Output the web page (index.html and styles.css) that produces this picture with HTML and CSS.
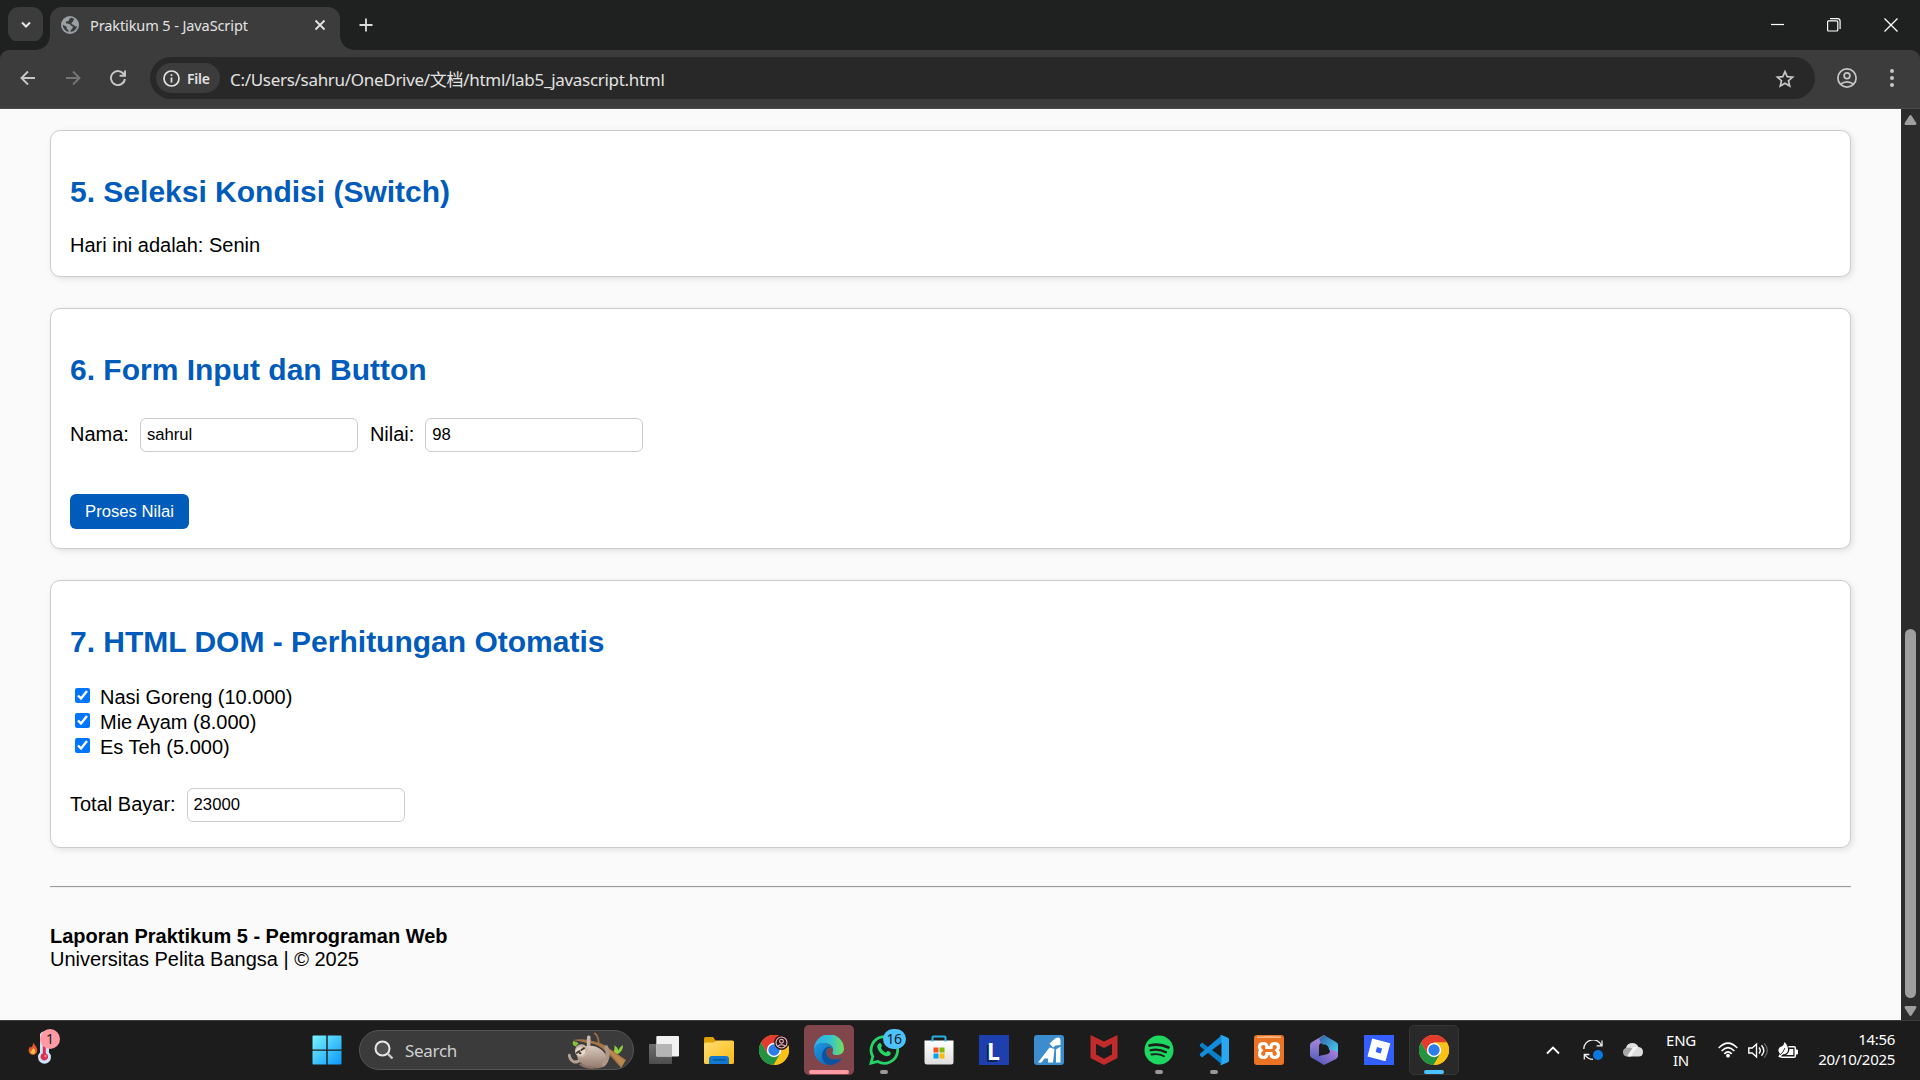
FILE: index.html
```html
<!DOCTYPE html>
<html lang="id">
<head>
<meta charset="utf-8">
<title>Praktikum 5 - JavaScript</title>
<link rel="stylesheet" href="styles.css">
</head>
<body>
<div class="screen">
  <header class="tabstrip">
    <div class="tab-search"><svg width="12" height="8" viewBox="0 0 12 8"><path d="M2 1.5l4 4 4-4" fill="none" stroke="#e6e6e6" stroke-width="2"/></svg></div>
    <div class="tab">
      <svg class="favicon" width="18" height="18" viewBox="0 0 18 18"><circle cx="9" cy="9" r="9" fill="#9aa0a6"/><path d="M10 1.8c-1 .8-2 .9-2 2.200 0 1-.8 1.200-1.800 1.200-1.200 0-1.700.8-1.200 1.900.4 1 2 .7 3.200.9 1.700.3 1.100 1.800 2.600 2 1.300.2 1.200 1.200.8 2.100-.5 1.200-1.600 1.300-1.900 2.500l-.2 1.500c3-.1 6.100-2.400 6.500-6-1.500.8-2.200.2-3-.8-.7-.9-2.300-.5-2.500-1.800-.2-1.200 1.500-1.300 1.700-2.400.1-1 .9-1.300 1.100-2.100C12.300 2.400 11.200 1.900 10 1.800zM1.800 8.500c0 3.800 2.400 6.700 5.700 7.500 0-1.200.2-1.900-.8-2.500-1-.5-1.200-1.500-1-2.500C4.700 9.700 3 9.500 1.800 8.500z" fill="#3c3c3c"/></svg>
      <span class="tab-title">Praktikum 5 - JavaScript</span>
      <svg class="tab-close" width="12" height="12" viewBox="0 0 12 12"><path d="M1.500 1.500l9 9m0-9l-9 9" stroke="#e3e3e3" stroke-width="1.800"/></svg>
    </div>
    <svg class="new-tab" width="14" height="14" viewBox="0 0 14 14"><path d="M7 .5v13M.5 7h13" stroke="#dcdcdc" stroke-width="1.800"/></svg>
    <div class="window-buttons">
      <svg width="14" height="14" viewBox="0 0 14 14"><path d="M1 6.500h13" stroke="#fff" stroke-width="1.200"/></svg>
      <svg width="14" height="14" viewBox="0 0 14 14"><rect x=".6" y="2.800" width="10.200" height="10.200" rx="1" fill="none" stroke="#fff" stroke-width="1.200"/><path d="M3 .7h7.500a2.600 2.600 0 0 1 2.600 2.600V11" fill="none" stroke="#fff" stroke-width="1.200"/></svg>
      <svg width="14" height="14" viewBox="0 0 14 14"><path d="M.5.5l13 13m0-13l-13 13" stroke="#fff" stroke-width="1.300"/></svg>
    </div>
  </header>

  <nav class="toolbar">
    <div class="nav-buttons">
      <svg width="16" height="16" viewBox="0 0 16 16"><path d="M15 8H2M8 1.500L1.500 8 8 14.500" fill="none" stroke="#c7c7c7" stroke-width="1.900"/></svg>
      <svg width="16" height="16" viewBox="0 0 16 16"><path d="M1 8h13M8 1.500L14.500 8 8 14.500" fill="none" stroke="#757575" stroke-width="1.900"/></svg>
      <svg width="16" height="16" viewBox="0 0 16 16"><path d="M14 4.500A7 7 0 1 0 14.900 9M15 .5v5.300H9.600" fill="none" stroke="#c7c7c7" stroke-width="1.900"/></svg>
    </div>
    <div class="omnibox">
      <div class="file-chip">
        <svg width="17" height="17" viewBox="0 0 17 17"><circle cx="8.500" cy="8.500" r="7.500" fill="none" stroke="#e3e3e3" stroke-width="1.700"/><path d="M8.500 7.500v5M8.500 4.300v1.700" stroke="#e3e3e3" stroke-width="1.700"/></svg>
        <span>File</span>
      </div>
      <span class="url">C:/Users/sahru/OneDrive/文档/html/lab5_javascript.html</span>
      <svg class="star" width="20" height="20" viewBox="0 0 20 20"><path d="M10 2.600l2.200 5 5.400.5-4.100 3.600 1.200 5.300L10 14.200 5.300 17l1.200-5.300-4.100-3.600 5.400-.5z" fill="none" stroke="#c7c7c7" stroke-width="1.700"/></svg>
    </div>
    <svg class="profile" width="20" height="20" viewBox="0 0 20 20"><g fill="none" stroke="#c7c7c7" stroke-width="1.700"><circle cx="10" cy="10" r="9.100"/><circle cx="10" cy="7.800" r="2.900"/><path d="M3.700 16.200c3.500-3.200 9.100-3.200 12.600 0"/></g></svg>
    <svg class="menu" width="6" height="20" viewBox="0 0 6 20"><g fill="#c7c7c7"><circle cx="3" cy="3" r="2"/><circle cx="3" cy="10" r="2"/><circle cx="3" cy="17" r="2"/></g></svg>
  </nav>

  <div class="viewport">
    <main class="page">
      <section class="card card-switch">
        <h2>5. Seleksi Kondisi (Switch)</h2>
        <p>Hari ini adalah: Senin</p>
      </section>
      <section class="card card-form">
        <h2>6. Form Input dan Button</h2>
        <div class="form-row">
          <label for="nama">Nama:</label><input id="nama" type="text" value="sahrul">
          <label for="nilai">Nilai:</label><input id="nilai" type="text" value="98">
        </div>
        <button type="button">Proses Nilai</button>
      </section>
      <section class="card card-dom">
        <h2>7. HTML DOM - Perhitungan Otomatis</h2>
        <label class="check"><input type="checkbox" checked><span>Nasi Goreng (10.000)</span></label>
        <label class="check"><input type="checkbox" checked><span>Mie Ayam (8.000)</span></label>
        <label class="check"><input type="checkbox" checked><span>Es Teh (5.000)</span></label>
        <div class="form-row total">
          <label for="total">Total Bayar:</label><input id="total" type="text" value="23000">
        </div>
      </section>
      <hr>
      <footer><b>Laporan Praktikum 5 - Pemrograman Web</b><br>Universitas Pelita Bangsa | © 2025</footer>
    </main>
    <div class="scrollbar">
      <svg width="13" height="10" viewBox="0 0 13 10"><path d="M5.200 1Q6.500-.8 7.800 1L12.300 8Q12.800 10 11 10H2Q.2 10 .7 8z" fill="#9f9f9f"/></svg>
      <div class="thumb"></div>
      <svg width="13" height="10" viewBox="0 0 13 10"><path d="M5.200 9Q6.500 10.800 7.800 9L12.300 2Q12.800 0 11 0H2Q.2 0 .7 2z" fill="#9f9f9f"/></svg>
    </div>
  </div>

  <footer class="taskbar">
    <div class="weather">
      <svg width="34" height="38" viewBox="0 0 34 38"><path d="M5.500 12.500c1 3 4 4.500 3.700 8a4.300 4.300 0 0 1-8.600.3c-.2-2 .8-3 1.400-4.300l1 1.300c1-1.500 2.300-3 2.500-5.300z" fill="#e8572a"/><path d="M5.500 18c1.500 1.800 2 3 1.600 4.500a2.400 2.400 0 0 1-4.600-.2c0-1.300 2-2.300 3-4.300z" fill="#fdc349"/><path d="M12 4a5 5 0 0 1 9 0v18.500a6.500 6.500 0 1 1-9 0z" fill="#cfe4fa"/><path d="M14.800 9h3v14.300a3.800 3.800 0 1 1-3 0z" fill="#d8304f"/><circle cx="17.500" cy="26" r="1.200" fill="#f88"/></svg>
      <span class="badge badge-pink">1</span>
    </div>
    <div class="app start"><svg width="30" height="30" viewBox="0 0 30 30"><defs><linearGradient id="win" x1="0" y1="0" x2="1" y2="1"><stop offset="0" stop-color="#7af3ff"/><stop offset="1" stop-color="#0a98fa"/></linearGradient></defs><path d="M1.500.5H14.300v14H.5V1.500q0-1 1-1zM15.700.5H28.500q1 0 1 1v13H15.700zM.5 15.800H14.300v13.700H1.500q-1 0-1-1zM15.700 15.800H29.500v12.700q0 1-1 1H15.700z" fill="url(#win)"/></svg></div>
    <div class="search">
      <svg width="20" height="20" viewBox="0 0 20 20"><circle cx="8.500" cy="8.500" r="7" fill="#505050" stroke="#e8e8e8" stroke-width="2"/><path d="M13.500 13.500l5 5" stroke="#ccc" stroke-width="2.400"/></svg>
      <span>Search</span>
      <svg class="sloth" width="60" height="37" viewBox="15 0 180 112"><defs><linearGradient id="fur" x1="0" y1="0" x2="0" y2="1"><stop offset="0" stop-color="#d9cabf"/><stop offset="1" stop-color="#94796b"/></linearGradient></defs>
        <path d="M38 44Q24 40 30 27q14 2 16 8z" fill="#86bf3c"/><path d="M152 62q4-10 3-22 10 6 11 16 4-12 15-17 0 20-20 30z" fill="#8fd03f"/>
        <path d="M94 3q14 12 13 32" fill="none" stroke="#a8743f" stroke-width="5"/>
        <path d="M28 24Q62 18 88 27q32 6 50 22l52 36-15 24Q150 78 118 50 98 34 74 34 50 26 28 24z" fill="#a67545"/><path d="M140 54l46 34-10 16Q158 78 136 60z" fill="#bd8751"/>
        <path d="M18 70q2 16 16 21 12 0 20-8" fill="none" stroke="#b5a092" stroke-width="9" stroke-linecap="round"/>
        <path d="M76 58L77 16" fill="none" stroke="#c9b8aa" stroke-width="11" stroke-linecap="round"/>
        <path d="M62 46Q92 34 118 56q22 20 12 42-12 14-36 11-34-2-50-26-8-22 18-37z" fill="url(#fur)"/>
        <path d="M122 98Q142 78 130 46" fill="none" stroke="#ad9788" stroke-width="12" stroke-linecap="round"/>
        <path d="M52 98q18 12 42 9" fill="none" stroke="#8d7466" stroke-width="7" stroke-linecap="round"/>
        <circle cx="55" cy="57" r="20" fill="#c7b4a5"/><ellipse cx="52" cy="59" rx="15" ry="13" fill="#e4d8cc"/><path d="M41 63l8-5M55 54l8-5" stroke="#4a3d38" stroke-width="6" stroke-linecap="round"/><ellipse cx="51" cy="64" rx="4" ry="3" fill="#332825"/></svg>
    </div>
    <div class="app"><svg width="30" height="28" viewBox="0 0 30 28"><defs><linearGradient id="tv" x1="0" y1="0" x2="0" y2="1"><stop offset="0" stop-color="#6f6f6f"/><stop offset="1" stop-color="#4d4d4d"/></linearGradient></defs><rect y="8" width="23" height="20" rx="1" fill="url(#tv)"/><rect x="7.300" width="22.700" height="20.500" rx="1" fill="#f1f1f1"/><path d="M7.300 8H23v12.500H7.300z" fill="#b5b5b5"/></svg></div>
    <div class="app"><svg width="30" height="27" viewBox="0 0 30 27"><defs><linearGradient id="fold" x1="0" y1="0" x2="1" y2="1"><stop offset="0" stop-color="#ffdf72"/><stop offset="1" stop-color="#fdb913"/></linearGradient></defs><path d="M0 1.500Q0 0 1.500 0H9l3 4H28q2 0 2 2v3H0z" fill="#dfa000"/><path d="M0 7q0-1.500 1.500-1.500H9.500L12.500 3.500H28.500Q30 3.500 30 5V25.500Q30 27 28.500 27H1.500Q0 27 0 25.500z" fill="url(#fold)"/><path d="M5 27V22q0-3 3-3H22q3 0 3 3v5z" fill="#1278d0"/><path d="M9 22.800H21.500" stroke="#07508f" stroke-width="1.200"/></svg></div>
    <div class="app"><svg width="30" height="30" viewBox="0 0 30 30"><g id="chrome"><circle cx="15" cy="15" r="15" fill="#fbc116"/><path d="M2 7.500A15 15 0 0 1 28 7.500H15L8.500 18.800z" fill="#e33b2e"/><path d="M2 7.500A15 15 0 0 0 15 30L21.500 18.800H8.500z" fill="#229342"/><path d="M15 15H22l-1 4-6.500 11A15 15 0 0 0 28 7.500H15z" fill="#fbc116"/><circle cx="15" cy="15" r="7.200" fill="#fff"/><circle cx="15" cy="15" r="5.700" fill="#2b7de9"/></g><circle cx="22.500" cy="7.500" r="7.400" fill="#2b171b"/><g fill="none" stroke="#eebfc5" stroke-width="1.100"><circle cx="22.500" cy="7.500" r="5.500"/><circle cx="22.500" cy="6.200" r="1.900"/><path d="M19 11q3.500-2.600 7 0"/></g></svg></div>
    <div class="app app-alert"><svg width="30" height="30" viewBox="0 0 30 30"><defs><linearGradient id="e1" x1="0" y1="0" x2="1" y2="0"><stop offset="0" stop-color="#2cadea"/><stop offset=".55" stop-color="#33c4cf"/><stop offset="1" stop-color="#76e055"/></linearGradient><linearGradient id="e2" x1="0" y1="0" x2="1" y2="1"><stop offset="0" stop-color="#1b9be4"/><stop offset="1" stop-color="#1057ab"/></linearGradient></defs><path d="M0 15A15 15 0 0 1 30 13.500C30 18 26.500 20 23 20c-4 0-5-1.500-4.200-3C20.500 11 15 8 10 8 5 8 1 11 0 15z" fill="url(#e1)"/><path d="M0 15C1 9 6 7.500 10 8c5 .6 8.500 3.500 8.800 6C16 11 12 14 12 18c0 5 6 9 15.500 5.300C24 28 20 30 15 30A15 15 0 0 1 0 15z" fill="url(#e2)"/><path d="M12 17c0 6 7 9.500 15.500 6.300C25 28 20 30.300 14.500 30 7 27 6 17 12 12.500 13.500 11.500 16 11.500 18 13c-3-1-6 1-6 4z" fill="#0d529d"/></svg><i class="bar bar-pink"></i></div>
    <div class="app"><svg width="30" height="30" viewBox="0 0 30 30"><path d="M2 28.200L3.800 21.500A13.300 13.300 0 1 1 8.800 26.500z" fill="none" stroke="#25d366" stroke-width="2.800"/><path d="M10 8.500c1.500-1 2 0 2.500 1.200.7 1.400.5 1.800-.6 3 .9 2.200 2.600 3.800 5 4.800 1.200-1.300 1.600-1.900 2.700-1.300 2 .9 2.600 1.400 2 2.800-1 2.400-4 2.600-6.500 1.500C11.500 18.800 9 15.500 8.300 12.500c-.3-1.600.2-3.200 1.700-4z" fill="#25d366"/></svg><span class="badge badge-blue">16</span><i class="bar bar-idle"></i></div>
    <div class="app"><svg width="30" height="30" viewBox="0 0 30 30"><defs><linearGradient id="st" x1="0" y1="0" x2="0" y2="1"><stop offset="0" stop-color="#fff"/><stop offset="1" stop-color="#dedede"/></linearGradient></defs><path d="M.5 5.500h29V27q0 2.500-2.500 2.500H3Q.5 29.500.5 27z" fill="url(#st)"/><path d="M8.500 6.500V2.500q0-1 1-1h11q1 0 1 1v4" fill="none" stroke="#28afe9" stroke-width="2"/><path d="M9.500 12.500h5v5h-5z" fill="#f25022"/><path d="M15.500 12.500h5v5h-5z" fill="#7fba00"/><path d="M9.500 18.500h5v5h-5z" fill="#00a4ef"/><path d="M15.500 18.500h5v5h-5z" fill="#ffb900"/></svg></div>
    <div class="app"><div class="tile-l"><span>L</span></div></div>
    <div class="app"><svg width="30" height="30" viewBox="0 0 30 30"><rect width="30" height="30" rx="3" fill="#3c8dce"/><path d="M4 27.500L15.500 12.500l5 1.500-1.500 13.500h-5V23.500h-3.500L7.500 27.500zM15.500 8.500L21 3.500q5-2.500 5.500 1.500v5l-5 .5-2.500 2zM22 14.500l4.500-3v16H22z" fill="#fff"/></svg></div>
    <div class="app"><svg width="28" height="30" viewBox="0 0 28 30"><path d="M.5 0L14 6.500 27.500 0V23L14 30 .5 23zM6 8.800V19.500l8 4.300 8-4.300V8.800L14 13z" fill="#c12b2b" fill-rule="evenodd"/></svg></div>
    <div class="app"><svg width="30" height="30" viewBox="0 0 30 30"><circle cx="15" cy="15" r="14.500" fill="#1ed760"/><g fill="none" stroke="#1c1c1c" stroke-linecap="round"><path d="M5.500 10.500q10-2.500 19 2" stroke-width="2.700"/><path d="M6.500 15.200q8-2 15.500 2" stroke-width="2.200"/><path d="M7.500 19.500q7-1.500 12.500 1.800" stroke-width="1.800"/></g></svg><i class="bar bar-idle"></i></div>
    <div class="app"><svg width="30" height="30" viewBox="0 0 30 30"><path d="M1 9.500l2-2 20 15v7L1.200 11.500q-1-1 0-2z" fill="#0a7fc9"/><path d="M1 20.500l2 2 20-15V0L1.200 18.500q-1 1 0 2z" fill="#128cdb"/><path d="M22.500 0L29 2.800q1 .5 1 1.700v21q0 1.200-1 1.700L22.500 30q-1 0-1.500-1 1.500 0 1.500-2V3q0-2-1.500-2 .5-1 1.500-1z" fill="#2aa8f2"/></svg><i class="bar bar-idle"></i></div>
    <div class="app"><svg width="30" height="30" viewBox="0 0 30 30"><rect width="30" height="30" rx="3" fill="#ea7424"/><path d="M3 1.500Q15 .5 27 1.500V3H3z" fill="#f6b587"/><path d="M9.500 8.500q3.500 0 3.500 4h4q0-4 3.500-4 4 0 4 3.500 0 2-1.500 3.200 1.500 1.300 1.500 3.600 0 3.700-4 3.700-3.500 0-3.500-4h-4q0 4-3.500 4-4 0-4-3.700 0-2.300 1.500-3.600-1.500-1.200-1.500-3.200 0-3.500 4-3.500z" fill="none" stroke="#fff" stroke-width="3.200"/></svg></div>
    <div class="app"><svg width="28" height="30" viewBox="0 0 28 30"><defs><linearGradient id="m1" x1="0" y1="0" x2="0" y2="1"><stop offset="0" stop-color="#b88cdf"/><stop offset="1" stop-color="#5763bd"/></linearGradient><linearGradient id="m2" x1="0" y1="0" x2="1" y2="1"><stop offset="0" stop-color="#315fa5"/><stop offset="1" stop-color="#49d3f4"/></linearGradient><linearGradient id="m3" x1="0" y1="1" x2="1" y2="0"><stop offset="0" stop-color="#4a55b5"/><stop offset="1" stop-color="#b184e0"/></linearGradient></defs><path d="M14 0L2 7Q0 8 0 10v10q0 2 2 3l4 2 3-5V11q0-2 2-3l6-4z" fill="url(#m1)"/><path d="M14 0l12 7q2 1 2 3v9l-9-4L11 8 9 4z" fill="url(#m2)"/><path d="M28 17v4q0 1.500-2 3L14 30 4 24l5-3 9-2q2-1 2-3v-2z" fill="url(#m3)"/><circle cx="14" cy="14.500" r="5" fill="#1c1c1c"/></svg></div>
    <div class="app"><svg width="30" height="30" viewBox="0 0 30 30"><path d="M0 0h30v30H0z" fill="#335fff"/><path d="M8.200 3.500L26.300 8.200 21.500 26.300 3.500 21.500zM13 12l-1.300 5 5 1.400 1.400-5z" fill="#fff" fill-rule="evenodd"/></svg></div>
    <div class="app app-active"><svg width="30" height="30" viewBox="0 0 30 30"><use href="#chrome"/></svg><i class="bar bar-active"></i></div>

    <div class="tray">
      <div class="tray-cell cell-30"><svg width="14" height="9" viewBox="0 0 14 9"><path d="M1 7.500L7 1.500l6 6" fill="none" stroke="#fff" stroke-width="1.800"/></svg></div>
      <div class="tray-cell cell-50"><svg width="20" height="20" viewBox="0 0 20 20"><path d="M.8 9A9.200 9.200 0 0 1 18.500 5.500M19 .5v5.300h-5.400M1.300 19.500v-5h5M1.800 14.800Q5 19.300 10 19.300" fill="none" stroke="#eee" stroke-width="1.300"/><circle cx="15" cy="15" r="5" fill="#0a78dc"/></svg></div>
      <div class="tray-cell cell-30"><svg width="20" height="14" viewBox="0 0 20 14"><path d="M4.500 13.500A4.500 4.500 0 0 1 3 5Q4 0 9.500 0q4 0 6 4 4.500.5 4.500 5 0 4.500-4.500 4.500z" fill="#dedede"/><path d="M3 5q5-1 8 1-5 2-7 7.500Q0 13 0 9q0-3 3-4z" fill="#a6a6a6"/><path d="M15.500 4Q12 6 8 13.500H5Q8 6 11 4z" fill="#f4f4f4"/></svg></div>
      <div class="tray-cell lang"><span>ENG</span><span>IN</span></div>
      <div class="tray-cell cell-30"><svg width="20" height="16" viewBox="0 0 20 16"><g fill="none" stroke="#fff" stroke-width="1.600"><path d="M.7 6Q10-3.800 19.300 6"/><path d="M3.600 9q6.400-6.800 12.800 0"/><path d="M6.300 11.900q3.700-4 7.400 0"/></g><circle cx="10" cy="13.700" r="1.900" fill="#fff"/></svg></div>
      <div class="tray-cell cell-30"><svg width="20" height="17" viewBox="0 0 20 17"><path d="M.8 6h3.400L8.500 2v13L4.200 11H.8z" fill="none" stroke="#fff" stroke-width="1.400"/><path d="M11 5.500q2.500 3 0 6M13.500 3.200q4.500 5.300 0 10.600" fill="none" stroke="#fff" stroke-width="1.400"/><path d="M16.300 1.300q6 7.200 0 14.400" fill="none" stroke="#666" stroke-width="1.300"/></svg></div>
      <div class="tray-cell cell-30"><svg width="20" height="17" viewBox="0 0 20 17"><path d="M10.500 4.800h5.500q1.300 0 1.300 1.300v7.800q0 1.300-1.300 1.300H4q-1.500 0-2-1.200" fill="none" stroke="#fff" stroke-width="1.500"/><path d="M17.500 7.500h1.500q1 0 1 1v3q0 1-1 1h-1.500zM11.500 7h3.800v6H8q3-1.500 3.500-6z" fill="#fff"/><path d="M6.500 0q3.500 3.500 3.500 7.500Q9.800 12 5 12.300L1.500 15.500.3 14.500 2 11.800Q-1 8.500 1.500 5.500 3 4.500 4 4.300 6 3 6.500 0z" fill="#fff"/><path d="M2 13Q5.500 10 7 6" stroke="#1c1c1c" fill="none" stroke-width=".9"/></svg></div>
      <div class="clock"><span>14:56</span><span>20/10/2025</span></div>
    </div>
  </footer>
</div>
</body>
</html>
```
FILE: styles.css
```css
* { box-sizing: border-box; }
body { margin: 0; background: #1c1c1c; }
svg { display: block; flex: none; }

.screen {
  display: flex;
  flex-direction: column;
  width: 1920px;
  height: 1080px;
  overflow: hidden;
  font-family: "Noto Sans", "Noto Sans CJK SC", sans-serif;
}

/* Tab strip */
.tabstrip {
  display: flex;
  height: 50px;
  padding: 7px 0 0 8px;
  background: #1f2120;
}
.tab-search {
  display: grid;
  place-items: center;
  width: 35px;
  height: 35px;
  border-radius: 11px;
  background: #3c3c3c;
}
.tab {
  position: relative;
  display: flex;
  align-items: center;
  width: 290px;
  height: 43px;
  margin-left: 7px;
  padding: 0 14px 7px 11px;
  border-radius: 12px 12px 0 0;
  background: #3c3c3c;
}
.tab::before, .tab::after {
  content: "";
  position: absolute;
  bottom: 0;
  width: 14px;
  height: 14px;
}
.tab::before { left: -14px; background: radial-gradient(circle at 0 0, transparent 13.5px, #3c3c3c 14px); }
.tab::after { right: -14px; background: radial-gradient(circle at 100% 0, transparent 13.5px, #3c3c3c 14px); }
.tab-title {
  flex: 1;
  margin-left: 11px;
  color: #e3e3e3;
  font-size: 14.5px;
  letter-spacing: -0.1px;
  white-space: nowrap;
}
.new-tab { margin: 11px 0 0 19px; }
.window-buttons {
  display: flex;
  gap: 43px;
  margin: 11px 22px 0 auto;
}

/* Toolbar */
.toolbar {
  display: flex;
  align-items: center;
  height: 59px;
  padding: 0 25px 2px 20px;
  border-bottom: 1px solid #4a4a4a;
  border-radius: 9px 9px 0 0;
  background: #3c3c3c;
  box-shadow: 0 -9px 0 0 #1f2120;
}
.nav-buttons { display: flex; gap: 29px; }
.omnibox {
  display: flex;
  align-items: center;
  width: 1665px;
  height: 42px;
  margin-left: 24px;
  padding: 0 20px 0 6px;
  border-radius: 21px;
  background: #282828;
}
.file-chip {
  display: flex;
  align-items: center;
  gap: 7px;
  width: 64px;
  height: 30px;
  padding-left: 7px;
  border-radius: 15px;
  background: #3c3c3c;
  color: #e3e3e3;
  font-size: 14px;
  font-weight: 600;
  letter-spacing: -0.2px;
}
.url {
  flex: 1;
  margin-left: 10px;
  color: #e3e3e3;
  font-size: 17px;
  letter-spacing: -0.3px;
  white-space: nowrap;
}
.star { margin-top: 2px; }
.profile { margin-left: 22px; }
.menu { margin-left: auto; }

/* Page */
.viewport { display: flex; height: 911px; }
.page {
  width: 1901px;
  padding: 21px 50px 0;
  background: #fafafa;
  color: #000;
  font-family: "Liberation Sans", Arial, sans-serif;
  font-size: 20px;
  line-height: 23px;
}
.card {
  margin-bottom: 31px;
  padding: 19px;
  border: 1px solid #ccc;
  border-radius: 10px;
  background: #fff;
  box-shadow: 2px 2px 6px rgba(0, 0, 0, 0.1);
}
.card-switch { height: 147px; }
.card-form { height: 241px; }
.card-dom { height: 268px; }
.card h2 {
  margin: 25px 0;
  color: #005bbb;
  font-size: 30px;
  line-height: 34px;
}
.card p { margin: 0; }
.form-row {
  display: flex;
  align-items: center;
  height: 34px;
  margin-top: 31px;
}
.form-row label { padding-bottom: 2px; }
.form-row input {
  width: 218px;
  height: 34px;
  margin: 0 12px 0 11px;
  padding: 0 6px;
  border: 1px solid #ccc;
  border-radius: 6px;
  background: #fff;
  color: #000;
  font: 16.67px "Liberation Sans", Arial, sans-serif;
}
.card button {
  display: block;
  width: 119px;
  height: 35px;
  margin-top: 42px;
  padding: 0;
  border: 0;
  border-radius: 6px;
  background: #005bbb;
  color: #fff;
  font: 16.67px "Liberation Sans", Arial, sans-serif;
}
.check {
  display: flex;
  height: 25px;
}
.check input {
  width: 15px;
  height: 15px;
  margin: 4px 10px 0 5px;
}
.check span { line-height: 26px; }
.form-row.total { margin-top: 29px; }
hr {
  height: 2px;
  margin: 38px 0 37px;
  border: 0;
  border-top: 1px solid #9a9a9a;
  border-bottom: 1px solid #eee;
}

/* Scrollbar */
.scrollbar {
  display: flex;
  flex-direction: column;
  align-items: center;
  width: 19px;
  padding: 6px 0 4px;
  background: #2c2c2c;
}
.thumb {
  width: 11px;
  height: 369px;
  margin: auto 0 8px;
  border-radius: 6px;
  background: #9f9f9f;
}

/* Taskbar */
.taskbar {
  display: flex;
  align-items: center;
  height: 60px;
  padding-bottom: 1px;
  border-top: 1px solid #3c3f3f;
  background: #1c1c1c;
  color: #fff;
}
.weather {
  position: relative;
  width: 299px;
  padding: 0 0 2px 28px;
}
.app {
  position: relative;
  display: grid;
  flex: none;
  place-items: center;
  width: 50px;
  height: 50px;
  margin: 0 2.5px;
  border-radius: 5px;
}
.start { margin: 0 7px 0 3px; }
.search {
  display: flex;
  align-items: center;
  width: 275px;
  height: 40px;
  margin-right: 2px;
  padding: 0 5px 0 14px;
  border: 1px solid #555;
  border-radius: 20px;
  background: #3b3b3b;
  color: #d0d0d0;
  font-size: 17px;
}
.search span { flex: 1; margin-left: 11px; letter-spacing: -0.3px; }
.app-alert { background: #81464c; }
.app-active { border: 1px solid #363636; background: #292929; }
.bar {
  position: absolute;
  bottom: 1px;
  left: 50%;
  width: 8px;
  height: 4px;
  border-radius: 2px;
  background: #999;
  transform: translateX(-50%);
}
.bar-pink { width: 40px; background: #ff99a4; }
.bar-active { bottom: 0; width: 20px; background: #4cc2ff; }
.badge {
  position: absolute;
  display: grid;
  place-items: center;
  height: 20px;
  border-radius: 10px;
  color: #1a1a1a;
  font-size: 14px;
  line-height: 20px;
}
.badge-pink { top: -1px; left: 40px; width: 20px; background: #ff99a4; }
.badge-blue { top: 4px; left: 24px; width: 23px; background: #4cc2ff; letter-spacing: -0.5px; }
.tile-l {
  display: grid;
  place-items: center;
  width: 30px;
  height: 30px;
  background: #1e40af;
  color: #fff;
  font: bold 23px "Noto Sans", sans-serif;
  text-shadow: -2px 2px 0 #0b2559;
}
.tray {
  display: flex;
  align-items: center;
  height: 58px;
  margin-left: auto;
  font-size: 15px;
  line-height: 20px;
}
.tray-cell { display: grid; place-items: center; }
.cell-30 { width: 30px; }
.cell-50 { width: 50px; }
.lang { width: 50px; margin: 0 7px 0 8px; letter-spacing: -0.3px; }
.clock {
  display: flex;
  flex-direction: column;
  align-items: flex-end;
  width: 92px;
  margin: 0 25px 2px 0;
  letter-spacing: -0.3px;
}
```
